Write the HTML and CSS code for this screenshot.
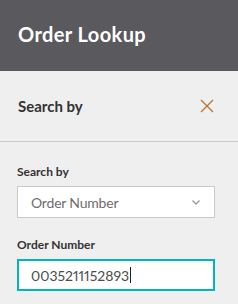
FILE: index.html
```html
<!DOCTYPE html>
<html lang="en">
<head>
    <meta charset="UTF-8">
    <meta name="viewport" content="width=device-width, initial-scale=1.0">
    <title>Order Lookup</title>
    <link rel="stylesheet" href="styles.css">
</head>
<body>
    <header class="app-header">
        <h1>Order Lookup</h1>
    </header>

    <section class="panel">
        <div class="panel-head">
            <h2>Search by</h2>
            <button class="close-btn" aria-label="Close">
                <svg width="14" height="14" viewBox="0 0 14 14">
                    <path d="M1 1 L13 13 M13 1 L1 13" stroke="currentColor" stroke-width="1.2" fill="none"/>
                </svg>
            </button>
        </div>

        <div class="panel-body">
            <div class="field">
                <label class="field-label">Search by</label>
                <div class="select">
                    <span>Order Number</span>
                    <svg class="chevron" width="8" height="5" viewBox="0 0 8 5">
                        <path d="M0.5 0.5 L4 4 L7.5 0.5" stroke="currentColor" stroke-width="1.3" fill="none"/>
                    </svg>
                </div>
            </div>

            <div class="field">
                <label class="field-label">Order Number</label>
                <div class="text-input focused">
                    <span>0035211152893</span><span class="caret"></span>
                </div>
            </div>
        </div>
    </section>
</body>
</html>
```

FILE: styles.css
```css
:root {
    --header-color: #5a595e;
    --background-color: #efefef;
    --text-color: #323232;
    --light-text: #6e6e6e;
    --border-color: #cacaca;
    --focus-color: #00b4c4;
    --accent-color: #b8702a;
}

body {
    font-family: 'Lato', 'Noto Sans', sans-serif;
    background-color: var(--background-color);
    margin: 0;
    padding: 0;
    color: var(--text-color);
}

.app-header {
    height: 71px;
    box-sizing: border-box;
    background-color: var(--header-color);
    display: flex;
    align-items: center;
    padding: 0 18px 3px;
}

.app-header h1 {
    margin: 0;
    color: white;
    font-size: 20px;
    letter-spacing: 0.4px;
    font-weight: bold;
}

.panel-head {
    height: 70px;
    border-bottom: 1px solid var(--border-color);
    display: flex;
    align-items: center;
    justify-content: space-between;
    padding: 0 24px 0 18px;
}

.panel-head h2 {
    margin: 0;
    font-size: 15px;
    font-weight: bold;
}

.close-btn {
    background: none;
    border: none;
    padding: 0;
    color: var(--accent-color);
    display: flex;
    cursor: pointer;
}

.panel-body {
    padding: 22px 23px 0 17px;
}

.field {
    margin-bottom: 19px;
}

.field-label {
    display: block;
    font-size: 12px;
    font-weight: bold;
    margin-bottom: 7px;
}

.select,
.text-input {
    height: 32px;
    box-sizing: border-box;
    background-color: white;
    border: 1px solid var(--border-color);
    display: flex;
    align-items: center;
    padding: 0 13px;
    font-size: 14px;
}

.select {
    justify-content: space-between;
    color: var(--light-text);
    letter-spacing: -0.2px;
}

.chevron {
    color: #9a9a9a;
    margin-right: 1px;
}

.text-input {
    color: #4c4c4c;
    padding-left: 12px;
    font-variant-numeric: proportional-nums;
}

.text-input.focused {
    border: 2px solid var(--focus-color);
}

.caret {
    width: 1px;
    height: 16px;
    background-color: #222;
    margin-left: 1px;
}
```
